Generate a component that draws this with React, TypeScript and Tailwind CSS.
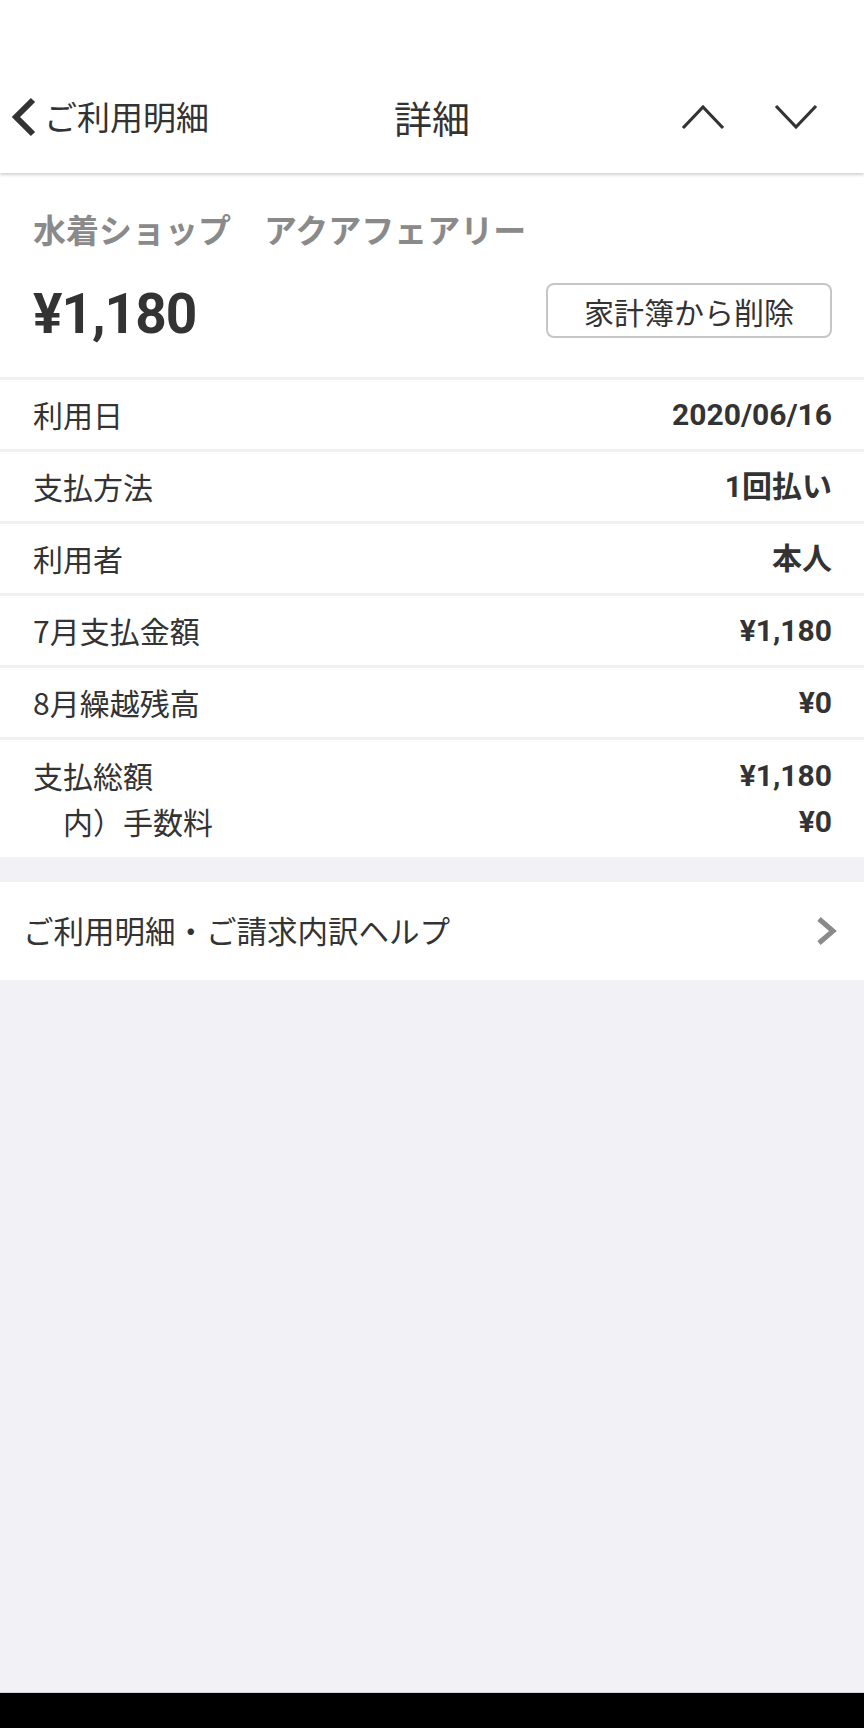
import React from "react";

const font = { fontFamily: "'Noto Sans CJK JP', 'Noto Sans', sans-serif" };
const num = { fontFamily: "Roboto, 'Noto Sans CJK JP', sans-serif" };

interface row {
  label: string;
  value: string;
}

const rows: row[] = [
  { label: "利用日", value: "2020/06/16" },
  { label: "支払方法", value: "1回払い" },
  { label: "利用者", value: "本人" },
  { label: "7月支払金額", value: "¥1,180" },
  { label: "8月繰越残高", value: "¥0" },
];

const Chevron = ({ dir }: { dir: "up" | "down" }) => (
  <svg width="46" height="28" viewBox="0 0 46 28" fill="none">
    <polyline
      points={dir == "up" ? "3,25 23,4 43,25" : "3,3 23,24 43,3"}
      stroke="#333333"
      strokeWidth="3.2"
    />
  </svg>
);

export default function App() {
  return (
    <div style={font} className="flex h-[1728px] w-[864px] flex-col bg-[#f2f1f6] text-[#333333]">
      {/* header */}
      <header className="relative z-10 bg-white pt-[60px] shadow-[0_2px_3px_rgba(0,0,0,0.18)]">
        <div className="grid h-[113px] grid-cols-[1fr_auto_1fr] items-center">
          <div className="flex items-center pl-[10px]">
            <svg width="28" height="40" viewBox="0 0 28 40" fill="none">
              <polyline points="23,3 6,20 23,37" stroke="#333333" strokeWidth="6" />
            </svg>
            <span className="ml-[6px] text-[33px] leading-none">ご利用明細</span>
          </div>
          <div className="text-[38px] leading-none">詳細</div>
          <div className="flex items-center justify-end gap-[47px] pr-[45px]">
            <Chevron dir="up" />
            <Chevron dir="down" />
          </div>
        </div>
      </header>

      {/* summary */}
      <section className="bg-white px-[33px] pt-[34px] pb-[39px]">
        <div className="text-[33px] font-bold leading-[44px] text-[#8a8a8a]">水着ショップ　アクアフェアリー</div>
        <div className="mt-[32px] flex h-[55px] items-center justify-between">
          <div style={num} className="mt-[8px] text-[55px] font-bold leading-none tracking-[-1px]">¥1,180</div>
          <button className="mr-[-1px] h-[55px] w-[286px] rounded-[8px] border-2 border-[#c6c6c6] bg-white text-[30px] leading-none text-[#333333]">
            家計簿から削除
          </button>
        </div>
      </section>

      {/* rows */}
      <section className="bg-white">
        {rows.map((r) => (
          <div
            key={r.label}
            className="flex h-[72px] items-center justify-between border-t-[3px] border-[#f0f0f3] pl-[33px] pr-[32px]"
          >
            <span className="text-[30px]">{r.label}</span>
            <span style={num} className="text-[30px] font-bold">{r.value}</span>
          </div>
        ))}
        <div className="border-t-[3px] border-[#f0f0f3] pt-[12px] pb-[13px] pl-[33px] pr-[32px]">
          <div className="flex h-[46px] items-center justify-between">
            <span className="text-[30px]">支払総額</span>
            <span style={num} className="text-[30px] font-bold">¥1,180</span>
          </div>
          <div className="flex h-[46px] items-center justify-between">
            <span className="text-[30px]">　内）手数料</span>
            <span style={num} className="text-[30px] font-bold">¥0</span>
          </div>
        </div>
      </section>

      {/* help link */}
      <div className="mt-[25px] flex h-[98px] items-center justify-between bg-white pl-[23px] pr-[26px]">
        <span className="text-[30.5px]">ご利用明細・ご請求内訳ヘルプ</span>
        <svg width="22" height="30" viewBox="0 0 22 30" fill="none">
          <polyline points="3,3 17,15 3,27" stroke="#8a8a8a" strokeWidth="5" />
        </svg>
      </div>

      <div className="flex-1" />
      <div className="h-[36px] border-t border-[#d4d3da] bg-black" />
    </div>
  );
}
